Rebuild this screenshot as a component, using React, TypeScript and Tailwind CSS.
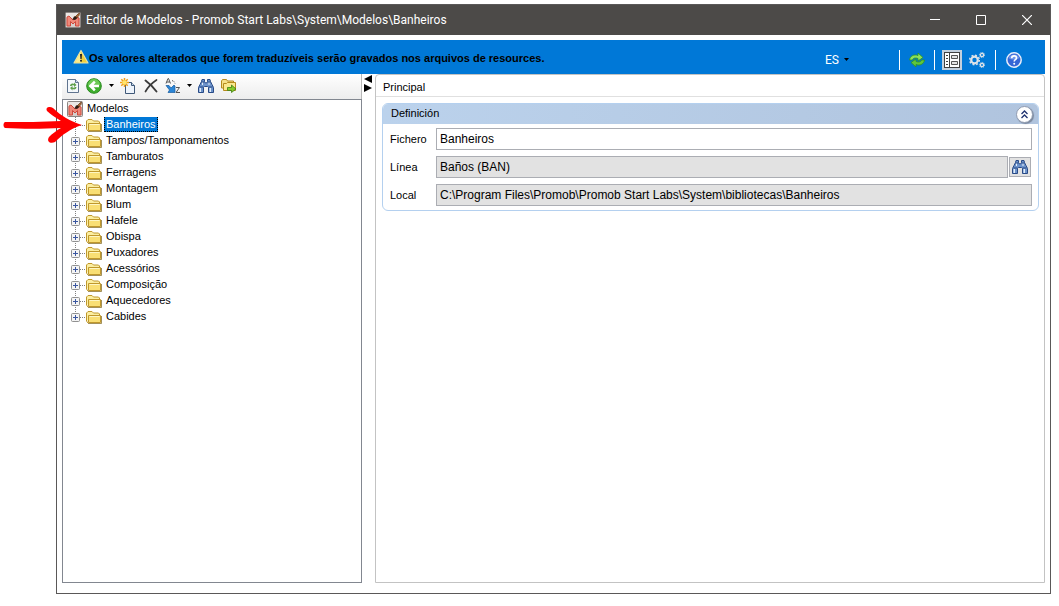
import type { ReactNode } from 'react'
import clsx from 'clsx'

const folders = [
  'Banheiros',
  'Tampos/Tamponamentos',
  'Tamburatos',
  'Ferragens',
  'Montagem',
  'Blum',
  'Hafele',
  'Obispa',
  'Puxadores',
  'Acessórios',
  'Composição',
  'Aquecedores',
  'Cabides',
]

function AppIcon() {
  return (
    <svg width="16" height="16" viewBox="0 0 16 16" className="shrink-0">
      <rect x="0.5" y="0.5" width="15" height="15" rx="1" fill="#d5d0cd" stroke="#8c8683" />
      <path d="M1 1h14v5H1z" fill="#ebe7e4" />
      <path d="M2 14V5l2-1 4 4 4-3 2 1v8h-3.500V9.500L8 12 5.500 9.500V14z" fill="#f0897a" stroke="#cf4a3d" />
      <path d="M7.500 7.500L9 4.500l3-.5.500 2-2.500 2z" fill="#2c1a10" />
      <path d="M10.500 4.500L13 2l1.500-1-.5 2.500-2 2z" fill="#b0703a" stroke="#5b3010" strokeWidth="0.7" />
    </svg>
  )
}

function WarningIcon() {
  return (
    <svg width="16" height="16" viewBox="0 0 16 16" className="shrink-0">
      <path d="M8 1.500L15 14H1z" fill="#f3cf3a" stroke="#e9e3a8" strokeWidth="1.200" strokeLinejoin="round" />
      <path d="M8 2.500v11H2z" fill="#fbec8d" />
      <path d="M7 5h2l-.4 5H7.400z" fill="#222" />
      <circle cx="8" cy="11.800" r="1" fill="#222" />
    </svg>
  )
}

function RefreshIcon() {
  return (
    <svg width="18" height="16" viewBox="0 0 18 16" strokeWidth="0.8">
      <path d="M1.500 8C2 4 6 2 10 3.500V1l5 4.500L10 9V6.500C7.500 5.500 5 6 4.500 8z" fill="#8be05f" stroke="#2f9420" />
      <path d="M16.500 8c-.5 4-4.500 6-8.500 4.500V15l-5-4.500L8 7v2.500c2.500 1 5 .5 5.500-1.500z" fill="#5fc63e" stroke="#2f9420" />
    </svg>
  )
}

function LayoutIcon() {
  return (
    <svg width="16" height="16" viewBox="0 0 16 16">
      <rect width="16" height="16" fill="#404040" />
      <path d="M1 1h4v14H1zM6 1h9v14H6z" fill="#fff" />
      <path d="M2 3.500h2M2 6.500h2M2 9.500h2M2 12.500h2" stroke="#404040" />
      <path d="M7.500 3.500h6v3h-6zM7.500 9.500h6v3h-6z" fill="#e4e4e4" stroke="#555" />
    </svg>
  )
}

function GearsIcon() {
  return (
    <svg width="16" height="16" viewBox="0 0 16 16" fill="none" stroke="#dfe3e8">
      <circle cx="5.500" cy="8" r="3.300" strokeWidth="2.200" />
      <circle cx="5.500" cy="8" r="4.800" strokeWidth="1.500" strokeDasharray="1.900 1.870" />
      <circle cx="13" cy="3" r="1.600" strokeWidth="1.300" />
      <circle cx="13" cy="3" r="2.600" strokeWidth="0.900" strokeDasharray="1.100 0.940" />
      <circle cx="13" cy="13" r="1.600" strokeWidth="1.300" />
      <circle cx="13" cy="13" r="2.600" strokeWidth="0.900" strokeDasharray="1.100 0.940" />
    </svg>
  )
}

function HelpIcon() {
  return (
    <svg width="16" height="16" viewBox="0 0 16 16">
      <circle cx="8" cy="8" r="7.200" fill="#3566d6" stroke="#e8eefb" strokeWidth="1.500" />
      <path d="M2.500 6a6 6 0 0 1 11 0c-3 2-8 2-11 0z" fill="#6f95ea" />
      <path d="M5.700 6.200c0-3.200 4.800-3 4.800-.2 0 1.700-2.300 1.700-2.300 3.500" fill="none" stroke="#fff" strokeWidth="1.600" />
      <circle cx="8.200" cy="11.800" r="1" fill="#fff" />
    </svg>
  )
}

function PageRefreshIcon() {
  return (
    <svg width="12" height="14" viewBox="0 0 12 14">
      <path d="M.5.5h8l3 3v10H.5z" fill="#f4f8fc" stroke="#60748f" />
      <path d="M8.500.5v3h3" fill="#cbd9e8" stroke="#60748f" />
      <path d="M3 7c0-2 2-3 4-2V3.500L9.500 6 7 8V6.500C5.500 6 5 6.500 4.500 7z" fill="#5fa04c" />
      <path d="M9.500 8c0 2-2 3-4 2v1.500L3 9l2.500-2v1.500c1.500.5 2 0 2.500-.5z" fill="#5fa04c" />
    </svg>
  )
}

function BackIcon() {
  return (
    <svg width="16" height="16" viewBox="0 0 16 16">
      <circle cx="8" cy="8" r="7.300" fill="#3fae2e" stroke="#2b8a21" />
      <path d="M2 7a6 6 0 0 1 12 0c-3 1.500-9 1.500-12 0z" fill="#6bc954" />
      <path d="M2.500 8L8 2.800l1.700 1.700L7.700 6.800H13v2.400H7.700l2 2.300L8 13.200z" fill="#fff" />
    </svg>
  )
}

function NewIcon() {
  return (
    <svg width="16" height="16" viewBox="0 0 16 16">
      <path d="M5.500 4.500h6l3 3v8h-9z" fill="#eef4fb" stroke="#3f5878" />
      <path d="M11.500 4.500v3h3" fill="#c6d6e8" stroke="#3f5878" />
      <path d="M4.500 0v9M0 4.500h9M1.300 1.300l6.400 6.400M7.700 1.300L1.300 7.700" stroke="#f0a018" strokeWidth="1.500" />
      <circle cx="4.500" cy="4.500" r="2.200" fill="#ffe46b" />
    </svg>
  )
}

function DeleteIcon() {
  return (
    <svg width="14" height="14" viewBox="0 0 14 14" fill="none" stroke="#3b3b3b" strokeLinecap="round">
      <path d="M1.500 1.500C5 4 9 8 12.500 12.500" strokeWidth="1.900" />
      <path d="M12.500 1C8 4 4 8 1.500 12.500" strokeWidth="1.700" />
    </svg>
  )
}

function SortIcon() {
  return (
    <svg width="16" height="16" viewBox="0 0 16 16">
      <path d="M1 5.500L3 .5h.5l2 5M1.800 4h3" fill="none" stroke="#555" />
      <path d="M11 9.500h3.500l-3.500 5h4" fill="none" stroke="#555" />
      <path d="M7 2.500l2 1 1 2" fill="none" stroke="#444" strokeDasharray="1 1" />
      <path d="M1 7.500h3l2 2.500 3-3 1 1v6.500H3L4.500 12z" fill="#2b86d6" stroke="#175a9e" strokeWidth="0.700" />
    </svg>
  )
}

function BinocularsIcon() {
  return (
    <svg width="16" height="14" viewBox="0 0 16 14">
      <path d="M4 .5h2.500v2l1 1.500h1l1-1.500v-2H12l.5 2 1.500 3 1.500 3v5h-5v-5l-1-1h-3l-1 1v5h-5v-5l1.500-3 1.500-3z" fill="#6d93cb" stroke="#284a86" />
      <path d="M1.500 9H3v4H1.500zM11.500 9H13v4h-1.500zM4 3h1v3H4zM10.500 3h1v3h-1z" fill="#e2edf9" />
      <path d="M1.500 8h4M10.500 8h4M3.500 3h3M9.500 3h3" stroke="#284a86" />
    </svg>
  )
}

function FolderArrowIcon() {
  return (
    <svg width="16" height="14" viewBox="0 0 16 14">
      <path d="M.5 9V2l1-1.500h4l1 1.500h6v7z" fill="#f6e08a" stroke="#b58a1c" />
      <path d="M2.500 11.500v-7h3l1-1h8v8z" fill="#fbe88f" stroke="#b58a1c" />
      <path d="M6.500 8.500h4V6l4.500 4-4.500 3.500V11.500h-4z" fill="#86cc2c" stroke="#3d7d13" strokeWidth="0.800" />
    </svg>
  )
}

function FolderIcon() {
  return (
    <svg width="16" height="13" viewBox="0 0 16 13" className="shrink-0">
      <path d="M.5 10V2L2 .5h4L7.500 2h5L13.500 3v2" fill="#fbeea0" stroke="#c0982c" />
      <path d="M.5 10L2 12" stroke="#c0982c" />
      <path d="M2.500 11.500v-7h12v7z" fill="#f9df74" stroke="#c0982c" />
      <path d="M3.500 5.500h10" stroke="#fdf6c4" />
      <path d="M2 12.500h13.500V5" fill="none" stroke="#7d6212" strokeWidth="0.700" />
    </svg>
  )
}

function Caret() {
  return (
    <svg width="5" height="3" viewBox="0 0 5 3">
      <path d="M0 0h5L2.500 3z" fill="#000" />
    </svg>
  )
}

function Branch({ leaf, last }: { leaf?: boolean; last?: boolean }) {
  return (
    <svg width="23" height="16" viewBox="0 0 23 16" className="block shrink-0">
      <path d={last ? 'M12.500 0v8' : 'M12.500 0v16'} stroke="#808080" strokeDasharray="1 1" />
      <path d="M13 8.500h10" stroke="#808080" strokeDasharray="1 1" />
      {!leaf && (
        <>
          <rect x="8.500" y="4.500" width="8" height="8" rx="1" fill="#f4f4f4" stroke="#919191" />
          <path d="M10 8.500h5M12.500 6v5" stroke="#3a56a0" />
        </>
      )}
    </svg>
  )
}

function PointerArrow() {
  return (
    <svg
      width="80"
      height="38"
      viewBox="0 0 80 38"
      className="pointer-events-none absolute -top-[11px] -left-[60px] z-10"
    >
      <path
        d="M2 16C20 16 40 16 58 15C52 11 47 8 44 5C42 1 47 0 50 2C58 10 67 15 79 19C67 23 59 29 52 36C48 38 43 36 46 31C49 28 54 24 58 22C40 23 18 23 2 22C0 21 0 17 2 16Z"
        fill="#ff0000"
      />
    </svg>
  )
}

function IconButton({ label, children, className }: { label: string; children: ReactNode; className?: string }) {
  return (
    <button type="button" aria-label={label} className={clsx('flex items-center justify-center', className)}>
      {children}
    </button>
  )
}

function TitleBar() {
  return (
    <header className="flex h-[30px] items-center bg-[#4c4a48] pl-2 text-white">
      <AppIcon />
      <h1 className="ml-[5px] flex-1 font-[Roboto,sans-serif] text-[12px] leading-4">
        Editor de Modelos - Promob Start Labs\System\Modelos\Banheiros
      </h1>
      <IconButton label="Minimizar" className="h-full w-[46px]">
        <svg width="10" height="10" stroke="#fff"><path d="M0 4.500h10" /></svg>
      </IconButton>
      <IconButton label="Maximizar" className="h-full w-[46px]">
        <svg width="10" height="10" fill="none" stroke="#fff"><path d="M.5.5h9v9h-9z" /></svg>
      </IconButton>
      <IconButton label="Cerrar" className="h-full w-[46px]">
        <svg width="10" height="10" stroke="#fff" strokeWidth="1.200"><path d="M0 0l10 10M10 0L0 10" /></svg>
      </IconButton>
    </header>
  )
}

function NoticeBar() {
  return (
    <div className="flex h-[34px] items-center bg-[#0078d7] pr-[23px] pl-[11px]">
      <WarningIcon />
      <p className="flex-1 pt-px text-[11px] leading-4 font-bold">
        Os valores alterados que forem traduzíveis serão gravados nos arquivos de resources.
      </p>
      <div className="flex items-center pt-[5px]">
        <button
          type="button"
          className="mr-[50px] flex items-center gap-[5px] font-[Roboto,sans-serif] text-[12px] leading-4 text-white"
        >
          ES
          <Caret />
        </button>
        <span className="h-5 w-px bg-white" />
        <IconButton label="Actualizar" className="mx-2"><RefreshIcon /></IconButton>
        <span className="h-5 w-px bg-white" />
        <IconButton label="Propiedades" className="ml-[7px] size-5 bg-[#c3d0de]"><LayoutIcon /></IconButton>
        <IconButton label="Configuración" className="mr-[10px] ml-[7px]"><GearsIcon /></IconButton>
        <span className="h-5 w-px bg-white" />
        <IconButton label="Ayuda" className="ml-[10px]"><HelpIcon /></IconButton>
      </div>
    </div>
  )
}

function ToolBar() {
  return (
    <div className="flex h-[25px] items-center border-r border-[#b8b8b8] bg-linear-to-b from-white to-[#ededed] pb-[2px] pl-[5px]">
      <IconButton label="Recargar"><PageRefreshIcon /></IconButton>
      <IconButton label="Volver" className="ml-[7px]"><BackIcon /></IconButton>
      <IconButton label="Historial" className="ml-[7px]"><Caret /></IconButton>
      <IconButton label="Nuevo" className="ml-[6px]"><NewIcon /></IconButton>
      <IconButton label="Eliminar" className="ml-2"><DeleteIcon /></IconButton>
      <IconButton label="Ordenar" className="ml-[7px]"><SortIcon /></IconButton>
      <IconButton label="Opciones de orden" className="ml-[6px]"><Caret /></IconButton>
      <IconButton label="Buscar" className="ml-[6px]"><BinocularsIcon /></IconButton>
      <IconButton label="Mover" className="ml-[7px]"><FolderArrowIcon /></IconButton>
    </div>
  )
}

function ModelTree() {
  return (
    <div className="flex-1 border border-[#828790] bg-white pt-px text-[11px] leading-[14px]">
      <div className="flex h-4 items-start gap-1 pl-1">
        <AppIcon />
        Modelos
      </div>
      <ul>
        {folders.map((name, i) => {
          const selected = i === 0
          return (
            <li key={name} className="relative flex h-4 items-start">
              {selected ? (
                <Branch leaf />
              ) : (
                <button type="button" aria-label={`Expandir ${name}`}>
                  <Branch last={i === folders.length - 1} />
                </button>
              )}
              <span className="pt-[2px]"><FolderIcon /></span>
              <span
                className={clsx(
                  'ml-[2px] border-x border-b px-px',
                  selected
                    ? 'border-dotted border-black bg-[#0078d7] text-white'
                    : 'border-transparent',
                )}
              >
                {name}
              </span>
              {selected && <PointerArrow />}
            </li>
          )
        })}
      </ul>
    </div>
  )
}

function Splitter() {
  return (
    <div className="flex w-[13px] flex-col items-start gap-px pt-px pl-[2px]">
      <IconButton label="Contraer panel">
        <svg width="8" height="8"><path d="M8 0v8L0 4z" /></svg>
      </IconButton>
      <IconButton label="Expandir panel">
        <svg width="8" height="8"><path d="M0 0v8l8-4z" /></svg>
      </IconButton>
    </div>
  )
}

function Field({ id, label, value, readOnly, children }: {
  id: string
  label: string
  value: string
  readOnly?: boolean
  children?: ReactNode
}) {
  return (
    <div className="flex items-center">
      <label htmlFor={id} className="w-[46px] shrink-0 text-[11px]">{label}</label>
      <input
        id={id}
        type="text"
        defaultValue={value}
        readOnly={readOnly}
        className={clsx(
          'h-[22px] min-w-0 flex-1 border border-[#abadb3] px-[3px] text-[12px] outline-none',
          readOnly ? 'bg-[#e2e2e2]' : 'bg-white',
        )}
      />
      {children}
    </div>
  )
}

function DetailPanel() {
  return (
    <main className="min-w-0 flex-1 rounded-tl rounded-tr border border-[#c3c3c3]">
      <h2 className="h-[22px] border-b border-[#e0e0e0] pt-1 pl-[7px] text-[11px] leading-4">Principal</h2>
      <section className="mt-[6px] mr-[5px] ml-[6px] overflow-hidden rounded-[6px] border border-[#b4d0ef]">
        <div className="flex h-5 items-center justify-between bg-linear-to-r from-[#bbd2ec] to-[#b0c4de] pr-[5px] pl-2">
          <h3 className="pb-[2px] text-[11px] leading-4">Definición</h3>
          <IconButton
            label="Contraer sección"
            className="size-[17px] rounded-full border border-[#8f9bb0] bg-white shadow-[1px_1px_1px_#7a879c]"
          >
            <svg width="9" height="9" fill="none" stroke="#1f3270" strokeWidth="1.300">
              <path d="M1.500 4l3-3 3 3M1.500 8l3-3 3 3" />
            </svg>
          </IconButton>
        </div>
        <div className="flex flex-col gap-[6px] pt-1 pr-[6px] pb-1 pl-[7px]">
          <Field id="fichero" label="Fichero" value="Banheiros" />
          <Field id="linea" label="Línea" value="Baños (BAN)" readOnly>
            <IconButton label="Buscar línea" className="mx-px h-5 w-[22px] border border-[#abadb3] bg-[#e2e2e2]">
              <BinocularsIcon />
            </IconButton>
          </Field>
          <Field
            id="local"
            label="Local"
            value="C:\Program Files\Promob\Promob Start Labs\System\bibliotecas\Banheiros"
            readOnly
          />
        </div>
      </section>
    </main>
  )
}

export default function App() {
  return (
    <div className="flex min-h-screen bg-white pt-1 pr-2 pb-3 pl-14 font-['Liberation_Sans',Arial,sans-serif] text-black">
      <div className="flex min-w-0 flex-1 flex-col border border-[#5a5858]">
        <TitleBar />
        <div className="flex flex-1 flex-col px-[5px] pt-[5px] pb-[10px]">
          <NoticeBar />
          <div className="flex flex-1">
            <aside className="flex w-[300px] shrink-0 flex-col">
              <ToolBar />
              <ModelTree />
            </aside>
            <Splitter />
            <DetailPanel />
          </div>
        </div>
      </div>
    </div>
  )
}
